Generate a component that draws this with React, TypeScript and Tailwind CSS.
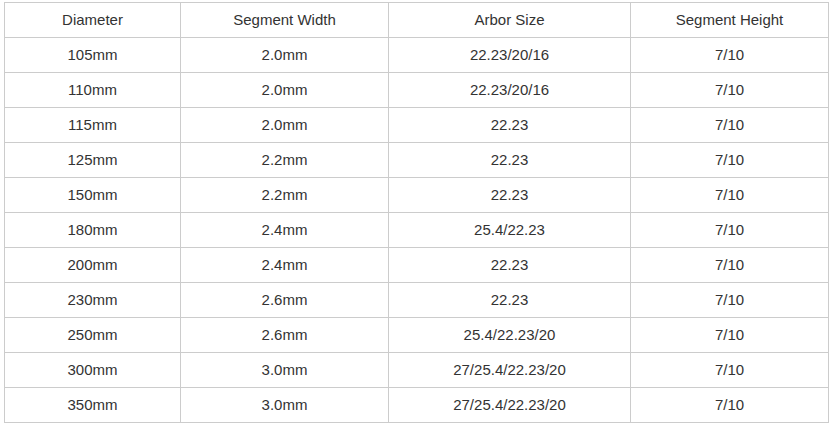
const headers = ['Diameter', 'Segment Width', 'Arbor Size', 'Segment Height'];

const rows = [
  ['105mm', '2.0mm', '22.23/20/16', '7/10'],
  ['110mm', '2.0mm', '22.23/20/16', '7/10'],
  ['115mm', '2.0mm', '22.23', '7/10'],
  ['125mm', '2.2mm', '22.23', '7/10'],
  ['150mm', '2.2mm', '22.23', '7/10'],
  ['180mm', '2.4mm', '25.4/22.23', '7/10'],
  ['200mm', '2.4mm', '22.23', '7/10'],
  ['230mm', '2.6mm', '22.23', '7/10'],
  ['250mm', '2.6mm', '25.4/22.23/20', '7/10'],
  ['300mm', '3.0mm', '27/25.4/22.23/20', '7/10'],
  ['350mm', '3.0mm', '27/25.4/22.23/20', '7/10'],
];

export default function App() {
  return (
    <div className="min-h-screen bg-white pl-1 pt-[2px] font-['Liberation_Sans',Arial,sans-serif] text-[15px] text-[#333]">
      <table className="w-[825px] table-fixed border-collapse">
        <colgroup>
          <col className="w-[176px]" />
          <col className="w-[208px]" />
          <col className="w-[242px]" />
          <col className="w-[198px]" />
        </colgroup>
        <thead>
          <tr>
            {headers.map((h) => (
              <th key={h} className="h-[35px] border border-[#ccc] p-0 text-center font-normal">
                {h}
              </th>
            ))}
          </tr>
        </thead>
        <tbody>
          {rows.map((r) => (
            <tr key={r[0]}>
              {r.map((c, i) => (
                <td key={i} className="h-[35px] border border-[#ccc] p-0 text-center">
                  {c}
                </td>
              ))}
            </tr>
          ))}
        </tbody>
      </table>
    </div>
  );
}
